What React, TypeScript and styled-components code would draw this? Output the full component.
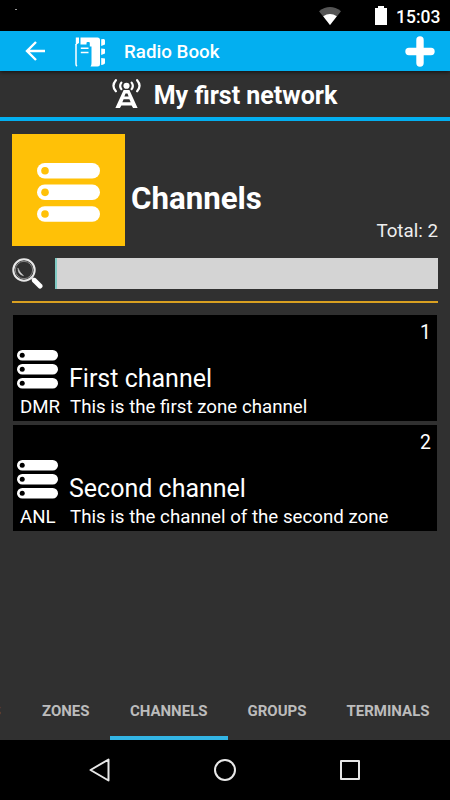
import React from "react";
import styled, { createGlobalStyle } from "styled-components";

const GlobalStyle = createGlobalStyle`
  * { box-sizing: border-box; }
  body { margin: 0; background: #000; }
`;

const Screen = styled.div`
  width: 450px;
  height: 800px;
  display: flex;
  flex-direction: column;
  overflow: hidden;
  background: #303030;
  color: #fff;
  font-family: Roboto, "Liberation Sans", sans-serif;
  white-space: nowrap;
  svg { display: block; flex: none; }
`;

const StatusBar = styled.header`
  height: 31px;
  flex: none;
  display: flex;
  align-items: center;
  background: #000;
  padding: 2px 11px 0 15px;
`;

const StatusMark = styled.span`
  width: 2px;
  height: 1px;
  margin: 0 auto 15px 0;
  background: #999;
`;

const WifiIcon = styled.svg`
  margin-bottom: 2px;
`;

const BatteryIcon = styled.svg`
  margin: 0 9px 2px 34px;
`;

const Clock = styled.time`
  width: 43px;
  font-size: 17.5px;
  font-weight: 500;
  line-height: 24px;
`;

const AppBar = styled.div`
  height: 40px;
  flex: none;
  display: flex;
  align-items: center;
  background: #03aff0;
  padding: 0 15px 0 25px;
  position: relative;
  box-shadow: 0 1px 4px rgba(0, 0, 0, 0.65);
`;

const AppTitle = styled.h1`
  margin: 1px auto 0 18px;
  font-size: 18.75px;
  font-weight: 500;
  line-height: 24px;
`;

const BookIcon = styled.svg`
  margin: 1px 0 0 30px;
`;

const NetworkBar = styled.div`
  height: 50px;
  flex: none;
  display: flex;
  justify-content: center;
  align-items: center;
  gap: 13px;
  border-bottom: 4px solid #03aff0;
`;

const TowerIcon = styled.svg`
  margin: 0 0 2px -1px;
`;

const NetworkName = styled.h2`
  margin: 4px 0 0;
  font-size: 25px;
  font-weight: 700;
  line-height: 30px;
`;

const Content = styled.main`
  flex: 1;
  min-height: 0;
  padding: 12.5px 12px 0;
`;

const Hero = styled.section`
  display: flex;
  height: 112.5px;
`;

const HeroTile = styled.div`
  width: 113px;
  height: 112.5px;
  display: flex;
  align-items: center;
  justify-content: center;
  background: #ffc107;
  padding-top: 5px;
`;

const HeroText = styled.div`
  flex: 1;
  display: flex;
  flex-direction: column;
  justify-content: flex-end;
  padding-left: 6px;
`;

const HeroTitle = styled.h2`
  margin: 0;
  font-size: 31.25px;
  font-weight: 700;
  line-height: 36px;
`;

const Total = styled.span`
  align-self: flex-end;
  font-size: 18.75px;
  line-height: 22px;
  margin: 3px 0 4px;
  color: #eee;
`;

const SearchRow = styled.div`
  display: flex;
  align-items: center;
  gap: 12px;
  height: 31px;
  margin-top: 12px;
`;

const SearchField = styled.input`
  flex: 1;
  min-width: 0;
  height: 31px;
  border: 0;
  border-left: 2px solid #80cbc4;
  border-radius: 0;
  background: #d4d4d4;
  outline: 0;
`;

const Rule = styled.hr`
  height: 2px;
  margin: 12px 0;
  border: 0;
  background: #d9a021;
`;

const List = styled.div`
  display: flex;
  flex-direction: column;
  gap: 4px;
  padding: 0 1px;
`;

const Card = styled.article`
  height: 106px;
  display: grid;
  grid-template-columns: 52px 1fr;
  grid-template-rows: 35px 40px 31px;
  background: #000;
  padding: 0 6px 0 4px;
`;

const CardIndex = styled.span`
  grid-column: 1 / -1;
  justify-self: end;
  margin-top: 7px;
  font-size: 19.4px;
  line-height: 22px;
`;

const CardName = styled.h3`
  margin: 14px 0 0;
  font-size: 25px;
  font-weight: 400;
  line-height: 30px;
`;

const CardText = styled.span<{ $code?: boolean }>`
  margin-top: 6px;
  padding-left: ${(p) => (p.$code ? "3px" : "1px")};
  font-size: 18.72px;
  line-height: 22px;
`;

const TabStrip = styled.nav`
  height: 60px;
  flex: none;
  display: flex;
  justify-content: flex-end;
  width: 450px;
`;

const Tab = styled.span<{ $width: number; $active?: boolean }>`
  width: ${(p) => p.$width}px;
  flex: none;
  height: 60px;
  padding: 22px 20.5px 0 0;
  text-align: right;
  font-size: 15px;
  line-height: 18px;
  font-weight: 700;
  color: #bcbcbc;
  border-bottom: 4px solid ${(p) => (p.$active ? "#33b5e5" : "transparent")};
`;

const NavBar = styled.footer`
  height: 60px;
  flex: none;
  display: flex;
  justify-content: center;
  gap: 101px;
  align-items: center;
  background: #000;
`;

function BarsIcon({ small }: { small?: boolean }) {
  const w = small ? 41 : 63;
  const h = small ? 38.5 : 59;
  const hole = small ? "#000" : "#ffc107";
  const bar = small ? 10.5 : 15.5;
  const step = small ? 14 : 21.6;
  return (
    <svg width={w} height={h} viewBox={`0 0 ${w} ${h}`}>
      {[0, 1, 2].map((i) => (
        <g key={i}>
          <rect y={i * step} width={w} height={bar} rx={bar / 2} fill="#fff" />
          <circle cx={small ? 5.2 : 8} cy={i * step + bar / 2} r={small ? 2.5 : 3.8} fill={hole} />
        </g>
      ))}
    </svg>
  );
}

const IconCell = styled.div`
  display: flex;
`;

const channels = [
  { index: 1, name: "First channel", code: "DMR", note: "This is the first zone channel" },
  { index: 2, name: "Second channel", code: "ANL", note: "This is the channel of the second zone" },
];

const tabs = [
  { label: "NETWORKS", width: 125 },
  { label: "ZONES", width: 89 },
  { label: "CHANNELS", width: 118, active: true },
  { label: "GROUPS", width: 99 },
  { label: "TERMINALS", width: 123 },
];

export default function App() {
  return (
    <>
      <GlobalStyle />
      <Screen>
        <StatusBar>
          <StatusMark />
          <WifiIcon width="22" height="18" viewBox="0 0 22 18">
            <path d="M0 4.2Q11-4.2 22 4.2L11 18Z" fill="#555" />
            <path d="M4.2 9.3Q11 4.8 17.8 9.3L11 18Z" fill="#fff" />
          </WifiIcon>
          <BatteryIcon width="12" height="19" viewBox="0 0 12 19">
            <path d="M0 2h3V0h6v2h3v17H0Z" fill="#fff" />
          </BatteryIcon>
          <Clock>15:03</Clock>
        </StatusBar>

        <AppBar>
          <svg width="20" height="20" viewBox="0 0 20 20" fill="none" stroke="#fff" strokeWidth="2.4">
            <path d="M11 1 2 10l9 9M2 10h18" />
          </svg>
          <BookIcon width="31" height="30" viewBox="0 0 31 30">
            <path d="M.8 .5H4V6L.8 8ZM5.5 .5H22.5Q25 .5 25 3V27Q25 29.5 22.5 29.5H15.5Q16.5 28.5 16.5 26V9.5H14.8V6Q14.8 5 13.8 5H12.5Q11.5 5 11.5 6V7.5H5.5Z" fill="#fff" />
            <path d="M1 7V27Q1 28.5 2 29.2" stroke="#fff" strokeWidth="1.5" fill="none" />
            <path d="M5.8 11.3H13.5M5.8 15.5H13.5" stroke="#fff" strokeWidth="1.6" />
            <path d="M26.2 2.2 28.7 2Q30 2 30 3.5V7.5L26.2 9ZM26.2 11.5 30 12V16.5L26.2 18ZM26.2 21 30 21.5V26Q29.8 27.5 26.2 28Z" fill="#fff" />
          </BookIcon>
          <AppTitle>Radio Book</AppTitle>
          <svg width="30" height="31" viewBox="0 0 30 31">
            <path d="M15 4v23M4 15.5h22" stroke="#fff" strokeWidth="7.4" strokeLinecap="round" />
          </svg>
        </AppBar>

        <NetworkBar>
          <TowerIcon width="29" height="31" viewBox="0 0 30 31" fill="none" stroke="#fff">
            <circle cx="15" cy="7.5" r="3.2" fill="#fff" stroke="none" />
            <path d="M9.7 4.2Q7.2 7.5 9.7 11M20.3 4.2Q22.8 7.5 20.3 11" strokeWidth="2.3" strokeLinecap="round" />
            <path d="M4 1.7Q-1 7.5 4 13.2M26 1.7Q31 7.5 26 13.2" strokeWidth="2.3" strokeLinecap="round" />
            <path d="M12 12H18L26.5 30.5H21.8L20.3 28H9.7L8.2 30.5H3.5ZM14 15.5 12.8 18.5H17.2L16 15.5ZM12 21.5 10.7 24.5H19.3L18 21.5Z" fill="#fff" fillRule="evenodd" stroke="none" />
          </TowerIcon>
          <NetworkName>My first network</NetworkName>
        </NetworkBar>

        <Content>
          <Hero>
            <HeroTile><BarsIcon /></HeroTile>
            <HeroText>
              <HeroTitle>Channels</HeroTitle>
              <Total>Total: 2</Total>
            </HeroText>
          </Hero>
          <SearchRow>
            <svg width="31" height="31" viewBox="0 0 31 31" fill="none" strokeLinecap="round">
              <circle cx="12" cy="12" r="10.7" stroke="#e8e8e8" strokeWidth="2" />
              <circle cx="12" cy="12" r="8.7" stroke="#888" strokeWidth="1" />
              <path d="M6 10.5Q5.5 16 11.5 17.8Q7.8 14.5 6 10.5Z" fill="#ddd" stroke="#bbb" strokeWidth=".6" />
              <path d="M19.5 19.5 21.5 21.5" stroke="#ddd" strokeWidth="2.5" />
              <path d="M22.5 22.5 28 28" stroke="#fff" strokeWidth="5" />
            </svg>
            <SearchField aria-label="Search" />
          </SearchRow>
          <Rule />
          <List>
            {channels.map((c) => (
              <Card key={c.index}>
                <CardIndex>{c.index}</CardIndex>
                <IconCell><BarsIcon small /></IconCell>
                <CardName>{c.name}</CardName>
                <CardText $code>{c.code}</CardText>
                <CardText>{c.note}</CardText>
              </Card>
            ))}
          </List>
        </Content>

        <TabStrip>
          {tabs.map((t) => (
            <Tab key={t.label} $width={t.width} $active={t.active}>{t.label}</Tab>
          ))}
        </TabStrip>

        <NavBar>
          <svg width="24" height="24" viewBox="0 0 24 24" fill="none" stroke="#e8e8e8" strokeWidth="2" strokeLinejoin="round">
            <path d="M20.5 1.5V22.5L2.5 12Z" />
          </svg>
          <svg width="24" height="24" viewBox="0 0 24 24" fill="none" stroke="#e8e8e8" strokeWidth="2">
            <circle cx="12" cy="12" r="10" />
          </svg>
          <svg width="24" height="24" viewBox="0 0 24 24" fill="none" stroke="#e8e8e8" strokeWidth="2" strokeLinejoin="round">
            <path d="M3 3H21V21H3Z" />
          </svg>
        </NavBar>
      </Screen>
    </>
  );
}
